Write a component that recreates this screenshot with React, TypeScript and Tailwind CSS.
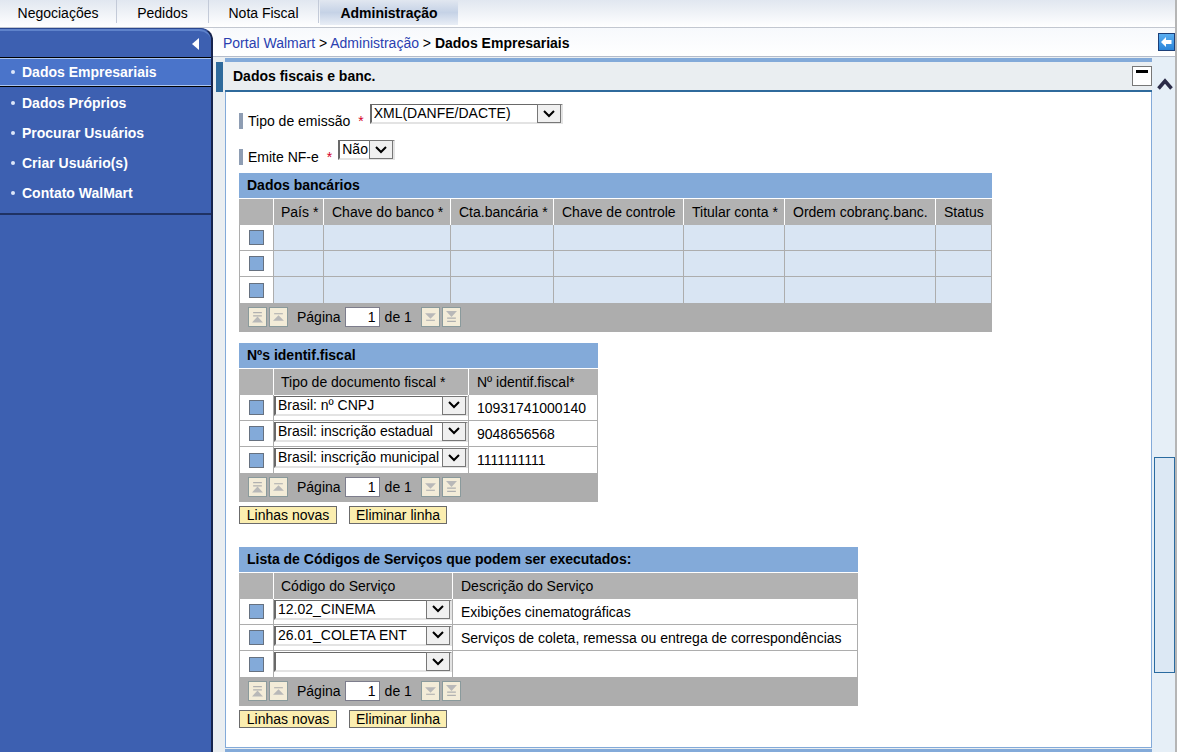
import React from "react";

const topTabs = [
  { label: "Negociações", width: "w-[117px]" },
  { label: "Pedidos", width: "w-[92px]" },
  { label: "Nota Fiscal", width: "w-[110px]" },
];

const sideLinks = ["Dados Próprios", "Procurar Usuários", "Criar Usuário(s)", "Contato WalMart"];

function Chevron() {
  return (
    <svg width="12" height="8" viewBox="0 0 12 8" fill="none" stroke="#000" strokeWidth="2">
      <path d="M1 1 L6 6 L11 1" />
    </svg>
  );
}

function Select({
  label,
  id,
  options,
  className,
}: {
  label?: string;
  id?: string;
  options: string[];
  className: string;
}) {
  return (
    <span className={"relative block h-5 " + className}>
      <select
        id={id}
        aria-label={label}
        className="block h-5 w-full appearance-none border-t border-r-2 border-b-2 border-l-2 border-t-[#696969] border-r-[#e3e3e3] border-b-[#e3e3e3] border-l-[#696969] bg-white pr-6 pl-[2px] text-[14px] leading-[17px] text-black outline-none"
      >
        {options.map((o) => (
          <option key={o}>{o}</option>
        ))}
      </select>
      <span className="pointer-events-none absolute top-0 right-[2px] flex h-[19px] w-6 items-center justify-center border border-[#777] bg-[#f0f0f0]">
        <Chevron />
      </span>
    </span>
  );
}

function Field({
  id,
  label,
  options,
  width,
}: {
  id: string;
  label: string;
  options: string[];
  width: string;
}) {
  return (
    <div className="flex h-[25px]">
      <label htmlFor={id} className="self-end border-l-4 border-[#8e9db3] pl-[5px] leading-4">
        {label}
        <span className="pr-[6px] pl-2 text-[#d4002a]">*</span>
      </label>
      <Select id={id} options={options} className={width} />
    </div>
  );
}

const pagerIcons: Record<string, React.ReactNode> = {
  "Primeira página": (
    <>
      <path d="M1 1.5h8M1 4.5h8" strokeWidth="1" />
      <path d="M5 5 L10 10.5 H0 Z" fill="#b8b8b8" stroke="none" />
    </>
  ),
  "Página anterior": (
    <>
      <path d="M1 2.5h8" strokeWidth="1" />
      <path d="M5 4 L10 9 H0 Z" fill="#b8b8b8" stroke="none" />
    </>
  ),
  "Próxima página": (
    <>
      <path d="M0 2 H10 L5 7 Z" fill="#b8b8b8" stroke="none" />
      <path d="M1 8.5h8" strokeWidth="1" />
    </>
  ),
  "Última página": (
    <>
      <path d="M0 0 H10 L5 5.5 Z" fill="#b8b8b8" stroke="none" />
      <path d="M1 6.5h8M1 9.5h8" strokeWidth="1" />
    </>
  ),
};

function PagerButton({ name }: { name: string }) {
  return (
    <button
      type="button"
      aria-label={name}
      className="flex h-5 w-[19px] items-center justify-center border border-[#8a9a9c] bg-[#f3ecd8]"
    >
      <svg width="11" height="12" viewBox="0 0 10 11" fill="none" stroke="#b0b0b0">
        {pagerIcons[name]}
      </svg>
    </button>
  );
}

function Pager() {
  return (
    <div className="flex h-[29px] items-center bg-[#adadad] pb-px pl-[9px]">
      <div className="flex gap-[2px]">
        <PagerButton name="Primeira página" />
        <PagerButton name="Página anterior" />
      </div>
      <label className="flex items-center pl-[9px]">
        Página
        <input
          type="text"
          defaultValue="1"
          className="mx-1 h-5 w-[35px] border border-[#7d7d8c] bg-white px-[3px] text-right text-[14px]"
        />
      </label>
      <span className="pr-[9px] pl-px">de 1</span>
      <div className="flex gap-[2px]">
        <PagerButton name="Próxima página" />
        <PagerButton name="Última página" />
      </div>
    </div>
  );
}

function Grid({
  title,
  columns,
  rows,
  shaded,
}: {
  title: string;
  columns: { label: string; width: string }[];
  rows: React.ReactNode[][];
  shaded?: boolean;
}) {
  return (
    <section className="w-fit">
      <table className="table-fixed border-separate border-spacing-0">
        <caption className="h-[26px] border-b border-white bg-[#83aad9] pl-2 text-left leading-[25px] font-bold">
          {title}
        </caption>
        <thead>
          <tr className="h-[26px] bg-[#b2b2b2]">
            <th className="w-[35px] border-r border-white p-0" aria-label="Seleção" />
            {columns.map((c) => (
              <th
                key={c.label}
                className={
                  "border-r border-white p-0 pb-px pl-[7px] text-left font-normal whitespace-nowrap last:border-[#b2b2b2] [&:nth-child(n+3)]:pl-2 " +
                  c.width
                }
              >
                {c.label}
              </th>
            ))}
          </tr>
        </thead>
        <tbody>
          {rows.map((cells, r) => (
            <tr key={r} className="group h-[26px]">
              <td className="border-x border-b border-[#adadad] bg-white p-0 group-last:border-b-0">
                <button
                  type="button"
                  aria-label={"Selecionar linha " + (r + 1)}
                  className="mx-auto block h-[15px] w-[15px] border border-[#667180] bg-[#83aad9]"
                />
              </td>
              {cells.map((cell, c) => (
                <td
                  key={c}
                  className={
                    "border-r border-b border-[#adadad] p-0 whitespace-nowrap group-last:border-b-0 " +
                    (shaded ? "bg-[#d9e5f3]" : "bg-white")
                  }
                >
                  {cell}
                </td>
              ))}
            </tr>
          ))}
        </tbody>
      </table>
      <Pager />
    </section>
  );
}

function Actions() {
  return (
    <div className="flex gap-3 pt-1">
      {["Linhas novas", "Eliminar linha"].map((t) => (
        <button
          key={t}
          type="button"
          className="h-[18px] w-[98px] border border-[#6b6b6b] bg-[#fbeeb0] leading-4"
        >
          {t}
        </button>
      ))}
    </div>
  );
}

const bankColumns = [
  { label: "País *", width: "w-[50px]" },
  { label: "Chave do banco *", width: "w-[127px]" },
  { label: "Cta.bancária *", width: "w-[103px]" },
  { label: "Chave de controle", width: "w-[130px]" },
  { label: "Titular conta *", width: "w-[101px]" },
  { label: "Ordem cobranç.banc.", width: "w-[151px]" },
  { label: "Status", width: "w-[56px]" },
];

const taxRows = [
  ["Brasil: nº CNPJ", "10931741000140"],
  ["Brasil: inscrição estadual", "9048656568"],
  ["Brasil: inscrição municipal", "1111111111"],
];

const serviceRows = [
  ["12.02_CINEMA", "Exibições cinematográficas"],
  ["26.01_COLETA ENT", "Serviços de coleta, remessa ou entrega de correspondências"],
  ["", ""],
];

function comboRows(data: string[][], label: string) {
  return data.map(([choice, text], i) => [
    <Select key="s" label={label + " " + (i + 1)} options={[choice]} className="mb-1 w-full" />,
    <span key="t" className="pl-2">
      {text}
    </span>,
  ]);
}

export default function App() {
  return (
    <div className="mr-px flex min-h-screen flex-col border-r-2 border-[#b5b5b5] bg-[#eaeef1] font-['Liberation_Sans',Arial,sans-serif] text-[14px] leading-4 text-black">
      <nav className="flex h-7 border-b border-[#c2c7d0] bg-linear-to-b from-[#e1e7f0] to-white">
        {topTabs.map((t) => (
          <a
            key={t.label}
            href="#"
            className={
              "mb-1 flex items-center justify-center border-r border-[#c3cad8] pt-[3px] " + t.width
            }
          >
            {t.label}
          </a>
        ))}
        <a
          href="#"
          className="mb-[2px] ml-px flex w-[138px] items-center justify-center bg-linear-to-b from-[#e1e7f0] via-[#c5d2e6] to-[#e9eef6] pt-px font-bold"
        >
          Administração
        </a>
      </nav>

      <div className="flex grow">
        <aside className="flex w-[213px] shrink-0 flex-col bg-[#fdfdfe]">
          <div className="flex grow flex-col rounded-tr-xl border-t border-r-2 border-t-[#2b478e] border-r-[#16244e] bg-[#3d60b1]">
            <div className="flex h-7 items-center justify-end rounded-tr-xl border-t-2 border-[#5f83cb] pr-3">
              <button type="button" aria-label="Recolher menu">
                <svg width="7" height="12" viewBox="0 0 7 12" fill="#fff">
                  <path d="M7 0 V12 L0 6 Z" />
                </svg>
              </button>
            </div>
            <div className="border-y border-black">
              <a
                href="#"
                className="flex h-7 items-center border-y border-[#a9c4f0] bg-[#4a74ca] pl-[11px] font-bold text-white"
              >
                <i className="mr-[7px] h-1 w-1 rounded-full bg-[#dce6fa]" />
                Dados Empresariais
              </a>
            </div>
            <div className="border-t border-b-2 border-t-[#3d60b1] border-b-[#1f3263] pb-[5px]">
              {sideLinks.map((l) => (
                <a
                  key={l}
                  href="#"
                  className="flex h-[30px] items-center pl-[11px] font-bold text-white"
                >
                  <i className="mr-[7px] h-1 w-1 rounded-full bg-[#dce6fa]" />
                  {l}
                </a>
              ))}
            </div>
          </div>
        </aside>

        <main className="flex min-w-0 grow flex-col">
          <div className="flex h-[29px] items-center justify-between border-b border-[#b4bccb] bg-linear-to-b from-[#f7f9fc] to-white pl-[10px]">
            <div className="pt-px">
              <a href="#" className="text-[#2a3fb0]">
                Portal Walmart
              </a>
              {" > "}
              <a href="#" className="text-[#2a3fb0]">
                Administração
              </a>
              {" > "}
              <b>Dados Empresariais</b>
            </div>
            <button
              type="button"
              aria-label="Voltar"
              className="flex h-[18px] w-[17px] items-center justify-center border border-[#1c3f78] bg-linear-to-b from-[#5aaef0] to-[#2a84d8]"
            >
              <svg width="11" height="10" viewBox="0 0 11 10" fill="#fff">
                <path d="M0 5 L5 0 V3 H10.5 V7 H5 V10 Z" />
              </svg>
            </button>
          </div>

          <div className="flex grow">
            <div className="flex min-w-0 grow flex-col pt-px pl-[3px]">
              <div className="flex">
                <div className="mt-1 mr-[2px] w-[7px] bg-[#2f6a9c]" />
                <div className="grow border-t-4 border-b-2 border-t-[#83aad9] border-b-[#2f6a9c]">
                  <div className="flex h-7 items-center justify-between pl-2">
                    <h2 className="font-bold">Dados fiscais e banc.</h2>
                    <button
                      type="button"
                      aria-label="Minimizar"
                      className="flex h-5 w-5 justify-center border border-[#777] bg-white pt-[3px]"
                    >
                      <span className="h-[3px] w-3 bg-black" />
                    </button>
                  </div>
                </div>
              </div>

              <div className="ml-[9px] grow border-x border-b border-[#83aad9] bg-white pt-3 pl-[13px]">
                <div className="flex flex-col gap-[11px] pb-2">
                  <Field
                    id="tipo"
                    label="Tipo de emissão"
                    options={["XML(DANFE/DACTE)"]}
                    width="w-[193px]"
                  />
                  <Field id="nfe" label="Emite NF-e" options={["Não", "Sim"]} width="w-[57px]" />
                </div>

                <Grid
                  title="Dados bancários"
                  columns={bankColumns}
                  rows={[0, 1, 2].map(() => bankColumns.map(() => null))}
                  shaded
                />

                <div className="pt-[11px]">
                  <Grid
                    title="Nºs identif.fiscal"
                    columns={[
                      { label: "Tipo de documento fiscal *", width: "w-[195px]" },
                      { label: "Nº identif.fiscal*", width: "w-[129px]" },
                    ]}
                    rows={comboRows(taxRows, "Tipo de documento fiscal")}
                  />
                  <Actions />
                </div>

                <div className="pt-[23px] pb-[19px]">
                  <Grid
                    title="Lista de Códigos de Serviços que podem ser executados:"
                    columns={[
                      { label: "Código do Serviço", width: "w-[179px]" },
                      { label: "Descrição do Serviço", width: "w-[405px]" },
                    ]}
                    rows={comboRows(serviceRows, "Código do Serviço")}
                  />
                  <Actions />
                </div>
              </div>
              <div className="mt-px ml-[9px] h-[3px] bg-[#83aad9]" />
            </div>

            <div className="flex w-[23px] shrink-0 flex-col bg-[#e6eff7] pl-[2px]">
              <button type="button" aria-label="Rolar para cima" className="mt-5 flex justify-center">
                <svg width="16" height="14" viewBox="0 0 16 14" fill="none" stroke="#2c2c48" strokeWidth="3.5">
                  <path d="M1.5 11.5 L8 4 L14.5 11.5" />
                </svg>
              </button>
              <div className="flex-[367]" />
              <div className="flex-[215] border border-[#2a6ba0] bg-[#dce8f4]" />
              <div className="flex-[79]" />
            </div>
          </div>
        </main>
      </div>
    </div>
  );
}
